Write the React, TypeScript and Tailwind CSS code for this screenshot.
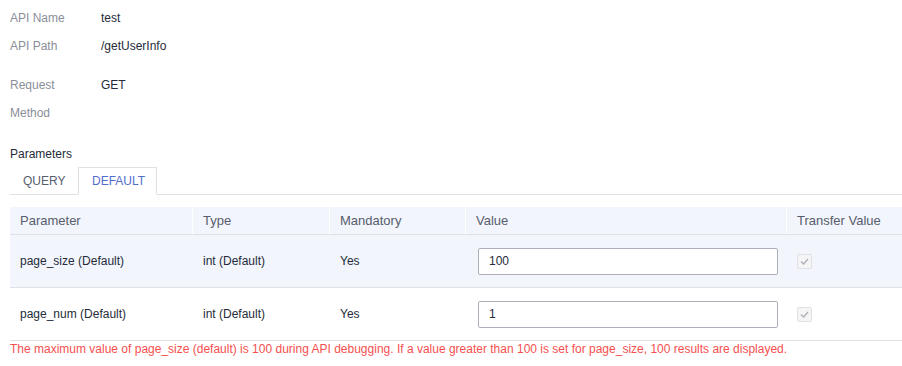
import React from "react";

const font = { fontFamily: '"Liberation Sans", Arial, sans-serif' };

function Check() {
  return (
    <div className="w-[15px] h-[15px] border border-[#dfe1e6] bg-[#f5f5f6] rounded-[2px] flex items-center justify-center">
      <svg width="11" height="11" viewBox="0 0 11 11">
        <path d="M2 5.5 L4.6 8 L9 3" fill="none" stroke="#b0b3bb" strokeWidth="1.4" />
      </svg>
    </div>
  );
}

const rows = [
  { name: "page_size (Default)", type: "int (Default)", mand: "Yes", value: "100", bg: "bg-[#f2f5fc]" },
  { name: "page_num (Default)", type: "int (Default)", mand: "Yes", value: "1", bg: "bg-white" },
];

export default function App() {
  return (
    <div className="w-[902px] h-[366px] bg-white pl-[10px] pt-[4px] text-[12px] text-[#252b3a]" style={font}>
      <div className="flex h-[28px] items-center">
        <div className="w-[91px] text-[#8a8e99]">API Name</div>
        <div>test</div>
      </div>
      <div className="flex h-[28px] items-center">
        <div className="w-[91px] text-[#8a8e99]">API Path</div>
        <div>/getUserInfo</div>
      </div>
      <div className="flex mt-[11px] leading-[28px]">
        <div className="w-[91px] text-[#8a8e99]">Request<br />Method</div>
        <div>GET</div>
      </div>
      <div className="mt-[19px] leading-[16px] h-[21px]">Parameters</div>
      <div className="flex border-b border-[#dfe1e6] h-[28px]">
        <div className="w-[68px] pl-[13px] flex items-center text-[#575d6c]">QUERY</div>
        <div className="w-[79px] border border-[#dfe1e6] border-b-white -mb-px pl-[13px] flex items-center text-[#526ecc] bg-white">DEFAULT</div>
      </div>
      <div className="mt-[12px]">
        <div className="flex h-[28px] bg-[#f2f5fc] border-b border-[#dfe1e6] text-[#575d6c] text-[13px] items-stretch">
          <div className="w-[183px] pl-[10px] flex items-center border-r border-white">Parameter</div>
          <div className="w-[137px] pl-[10px] flex items-center border-r border-white">Type</div>
          <div className="w-[136px] pl-[10px] flex items-center border-r border-white">Mandatory</div>
          <div className="w-[321px] pl-[10px] flex items-center border-r border-white">Value</div>
          <div className="flex-1 pl-[10px] flex items-center">Transfer Value</div>
        </div>
        {rows.map((r) => (
          <div key={r.name} className={`flex h-[53px] border-b border-[#dfe1e6] items-center ${r.bg}`}>
            <div className="w-[183px] pl-[10px]">{r.name}</div>
            <div className="w-[137px] pl-[10px]">{r.type}</div>
            <div className="w-[136px] pl-[10px]">{r.mand}</div>
            <div className="w-[321px] pl-[12px]">
              <div className="w-[300px] h-[27px] border border-[#adb0b8] rounded-[2px] bg-white flex items-center pl-[10px]">
                {r.value}
              </div>
            </div>
            <div className="flex-1 pl-[10px]">
              <Check />
            </div>
          </div>
        ))}
      </div>
      <div className="text-[#f5504f] mt-0 leading-[16px]">
        The maximum value of page_size (default) is 100 during API debugging. If a value greater than 100 is set for page_size, 100 results are displayed.
      </div>
    </div>
  );
}
